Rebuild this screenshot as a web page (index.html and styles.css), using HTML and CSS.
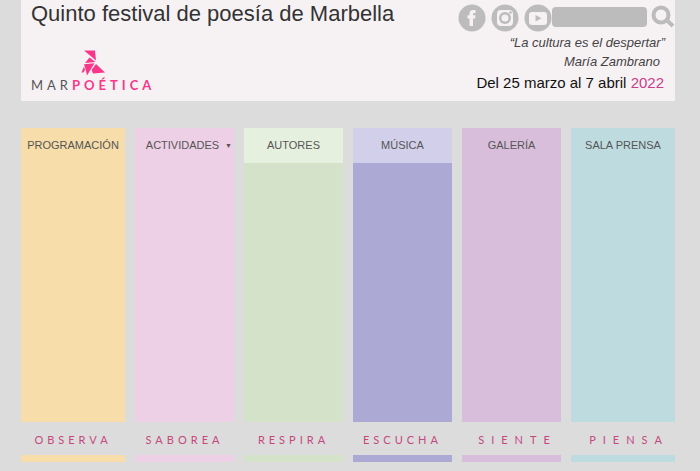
FILE: index.html
```html
<!DOCTYPE html>
<html lang="es">
<head>
<meta charset="utf-8">
<meta name="viewport" content="width=device-width, initial-scale=1">
<title>Marpoética</title>
<link rel="stylesheet" href="styles.css">
</head>
<body>
<div class="page">
  <header class="header">
    <div class="brand">
      <h1 class="title">Quinto festival de poesía de Marbella</h1>
      <a class="logo" href="#">
        <svg class="logo-mark" viewBox="0 0 24 26" aria-hidden="true">
          <path d="M3 0.500H14L15 10.500Z"/>
          <path d="M8.500 7.500L14.500 12L4 13Z"/>
          <path d="M3 14.300L13.500 13.300L6 25.500L4.500 19Z"/>
          <path d="M3 16.500L4 20L2.500 22.500H0.500Z"/>
          <path d="M15 14L24 22.500L12 23.500L10.500 20Z"/>
        </svg>
        <span class="logo-text">MAR<b>POÉTICA</b></span>
      </a>
    </div>
    <div class="aside">
      <div class="tools">
        <a class="social" href="#" aria-label="Facebook">
          <svg viewBox="0 0 28 28"><circle cx="14" cy="14" r="13.500"/><path class="light" d="M11.500 22V14.500H9.500V11.200H11.500V9.500Q11.500 6 15 6H17.500V9H16Q15 9 15 10V11.200H17.500L17.100 14.500H15V22Z"/></svg>
        </a>
        <a class="social" href="#" aria-label="Instagram">
          <svg viewBox="0 0 28 28"><circle cx="14" cy="14" r="13.500"/><rect class="light" x="6" y="6" width="16" height="16" rx="4"/><circle cx="14" cy="14" r="6"/><circle class="light" cx="14" cy="14" r="3.500"/><circle cx="19.500" cy="8.500" r="1.300"/></svg>
        </a>
        <a class="social" href="#" aria-label="YouTube">
          <svg viewBox="0 0 28 28"><circle cx="14" cy="14" r="13.500"/><rect class="light" x="5" y="8" width="18" height="13" rx="3"/><path d="M11.500 11V17.500L17.500 14.200Z"/></svg>
        </a>
        <form class="search">
          <input class="search-box" type="search" aria-label="Buscar">
          <button class="search-button" type="button" aria-label="Buscar">
            <svg viewBox="0 0 24 24"><circle cx="10" cy="10" r="7.500"/><path d="M15.500 15L22 21"/></svg>
          </button>
        </form>
      </div>
      <blockquote class="quote">
        <p class="line">“La cultura es el despertar”</p>
        <p class="author">María Zambrano</p>
      </blockquote>
      <p class="dates">Del 25 marzo al 7 abril <span class="year">2022</span></p>
    </div>
  </header>
  <nav class="menu">
    <div class="column sand"><a class="tab" href="#">PROGRAMACIÓN</a><div class="panel"></div><span class="verb">OBSERVA</span><div class="bar"></div></div>
    <div class="column pink"><a class="tab has-menu" href="#">ACTIVIDADES<span class="arrow">▼</span></a><div class="panel"></div><span class="verb">SABOREA</span><div class="bar"></div></div>
    <div class="column green"><a class="tab" href="#">AUTORES</a><div class="panel"></div><span class="verb">RESPIRA</span><div class="bar"></div></div>
    <div class="column violet"><a class="tab" href="#">MÚSICA</a><div class="panel"></div><span class="verb">ESCUCHA</span><div class="bar"></div></div>
    <div class="column mauve"><a class="tab" href="#">GALERÍA</a><div class="panel"></div><span class="verb wide">SIENTE</span><div class="bar"></div></div>
    <div class="column aqua"><a class="tab" href="#">SALA PRENSA</a><div class="panel"></div><span class="verb wide">PIENSA</span><div class="bar"></div></div>
  </nav>
</div>
</body>
</html>
```
FILE: styles.css
```css
* {
  box-sizing: border-box;
}

body {
  margin: 0;
  background: #dcdcdc;
  color: #333;
  font-family: "Liberation Sans", Arial, sans-serif;
}

h1,
p,
blockquote {
  margin: 0;
  font-weight: normal;
}

a {
  color: inherit;
  text-decoration: none;
}

svg {
  display: block;
}

.page {
  display: flex;
  flex-direction: column;
  min-height: 100vh;
  padding: 0 25px 9px 21px;
}

.header {
  display: flex;
  justify-content: space-between;
  padding: 0 0 7px 10px;
  background: #f6f2f4;
}

.title {
  font-size: 22px;
  line-height: 28px;
}

.logo {
  display: inline-flex;
  flex-direction: column;
  align-items: center;
  margin-top: 22px;
}

.logo-mark {
  width: 24px;
  height: 26px;
  fill: #f8378a;
}

.logo-text {
  color: #555;
  font-family: Lato, sans-serif;
  font-size: 13px;
  line-height: 18px;
  letter-spacing: 4px;
}

.logo-text b {
  color: #f8378a;
}

.aside {
  display: flex;
  flex-direction: column;
  align-items: flex-end;
  padding-top: 4px;
}

.tools {
  display: flex;
  align-items: center;
  gap: 5px;
}

.social svg {
  width: 28px;
  height: 28px;
  fill: #bcbcbc;
}

.social .light {
  fill: #f6f2f4;
}

.search {
  display: flex;
  align-items: center;
  gap: 4px;
  margin: 0 0 2px -5px;
}

.search-box {
  width: 95px;
  height: 20px;
  padding: 0 6px;
  border: 0;
  border-radius: 4px;
  background: #bcbcbc;
}

.search-button {
  padding: 0;
  border: 0;
  background: none;
}

.search-button svg {
  width: 24px;
  height: 24px;
  fill: none;
  stroke: #bcbcbc;
  stroke-width: 4;
}

.quote {
  padding: 1px 10px 0 0;
  color: #444;
  font-size: 13px;
  font-style: italic;
  line-height: 19px;
  text-align: right;
}

.author {
  padding-right: 5px;
}

.dates {
  padding-right: 11px;
  color: #111;
  font-size: 15px;
  line-height: 23px;
}

.year {
  color: #c8408a;
}

.menu {
  display: grid;
  flex: 1;
  grid-template-columns: 104fr 99fr 99fr 99fr 99fr 104fr;
  gap: 10px;
  margin-top: 27px;
}

.column {
  display: flex;
  flex-direction: column;
}

.tab {
  position: relative;
  background: var(--tab, var(--tone));
  color: #555;
  font-size: 11px;
  line-height: 35px;
  text-align: center;
  white-space: nowrap;
}

.has-menu {
  padding-right: 4px;
}

.arrow {
  position: absolute;
  right: 2px;
  font-size: 7px;
}

.panel {
  flex: 1;
  min-height: 120px;
  background: var(--tone);
}

.verb {
  padding-top: 2px;
  color: #c4487c;
  font-family: Lato, sans-serif;
  font-size: 11px;
  line-height: 31px;
  letter-spacing: 4px;
  text-align: center;
}

.wide {
  padding-left: 12px;
  letter-spacing: 7px;
}

.bar {
  height: 7px;
  background: var(--tone);
}

.sand { --tone: #f6dda9; }
.pink { --tone: #eed0e6; }
.green { --tone: #d4e2ca; --tab: #e6f0df; }
.violet { --tone: #aca9d5; --tab: #d1cfe9; }
.mauve { --tone: #d9bedb; }
.aqua { --tone: #bedcdf; }
```
